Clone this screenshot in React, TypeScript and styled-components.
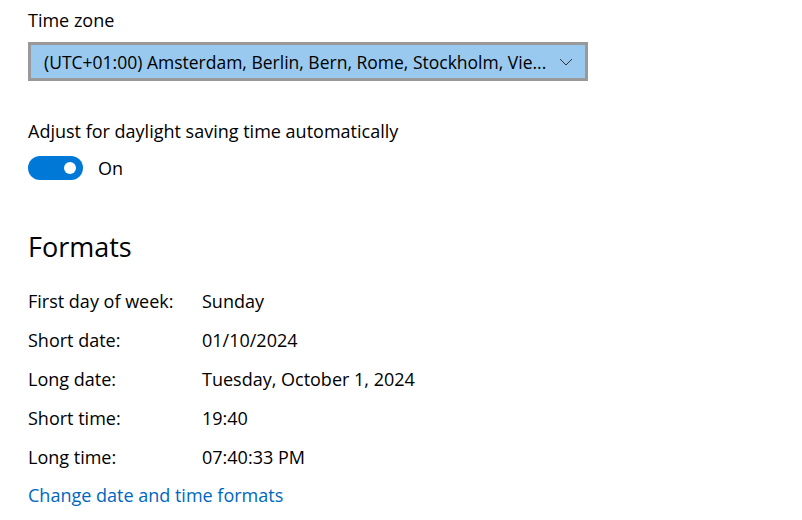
import React from "react";
import styled, { createGlobalStyle } from "styled-components";

const Global = createGlobalStyle`
  html, body { margin: 0; padding: 0; background: #ffffff; }
  body { font-family: "Open Sans", "Noto Sans", sans-serif; color: #000; }
`;

const Page = styled.div`
  width: 802px;
  height: 520px;
  box-sizing: border-box;
  padding: 8px 0 0 28px;
  overflow: hidden;
`;

const Label = styled.div<{ $mt?: number }>`
  font-size: 18px;
  line-height: 24px;
  color: #000;
  margin-top: ${(p) => p.$mt ?? 0}px;
  white-space: nowrap;
`;

const Dropdown = styled.div`
  margin-top: 10px;
  width: 560px;
  height: 39px;
  box-sizing: border-box;
  border: 3px solid #999999;
  background: #99c9ef;
  display: flex;
  align-items: center;
  padding: 0 12px 0 13px;
  font-size: 17.5px;
  color: #000;
`;

const DropText = styled.span`
  flex: 1;
  white-space: nowrap;
  overflow: hidden;
`;

const ToggleRow = styled.div`
  margin-top: 13px;
  display: flex;
  align-items: center;
  gap: 15px;
`;

const Track = styled.div`
  width: 55px;
  height: 24px;
  border-radius: 12px;
  background: #0078d7;
  display: flex;
  align-items: center;
  justify-content: flex-end;
  padding-right: 7px;
  box-sizing: border-box;
`;

const Thumb = styled.div`
  width: 12px;
  height: 12px;
  border-radius: 50%;
  background: #fff;
`;

const Heading = styled.div`
  margin-top: 49px;
  font-size: 27px;
  line-height: 36px;
  font-weight: 400;
  color: #000;
`;

const Grid = styled.div`
  margin-top: 16px;
  display: grid;
  grid-template-columns: 174px auto;
  grid-auto-rows: 39px;
  align-items: center;
  font-size: 18px;
`;

const Link = styled.a`
  font-size: 18px;
  line-height: 39px;
  color: #0067c0;
  text-decoration: none;
  display: block;
`;

const rows: [string, string][] = [
  ["First day of week:", "Sunday"],
  ["Short date:", "01/10/2024"],
  ["Long date:", "Tuesday, October 1, 2024"],
  ["Short time:", "19:40"],
  ["Long time:", "07:40:33 PM"],
];

export default function App() {
  return (
    <>
      <Global />
      <Page>
        <Label>Time zone</Label>
        <Dropdown>
          <DropText>(UTC+01:00) Amsterdam, Berlin, Bern, Rome, Stockholm, Vie...</DropText>
          <svg width="14" height="8" viewBox="0 0 14 8">
            <path d="M1 1 L7 7 L13 1" fill="none" stroke="#333" strokeWidth="1" />
          </svg>
        </Dropdown>
        <Label $mt={38}>Adjust for daylight saving time automatically</Label>
        <ToggleRow>
          <Track>
            <Thumb />
          </Track>
          <Label>On</Label>
        </ToggleRow>
        <Heading>Formats</Heading>
        <Grid>
          {rows.map(([k, v]) => (
            <React.Fragment key={k}>
              <span>{k}</span>
              <span>{v}</span>
            </React.Fragment>
          ))}
        </Grid>
        <Link href="#">Change date and time formats</Link>
      </Page>
    </>
  );
}
